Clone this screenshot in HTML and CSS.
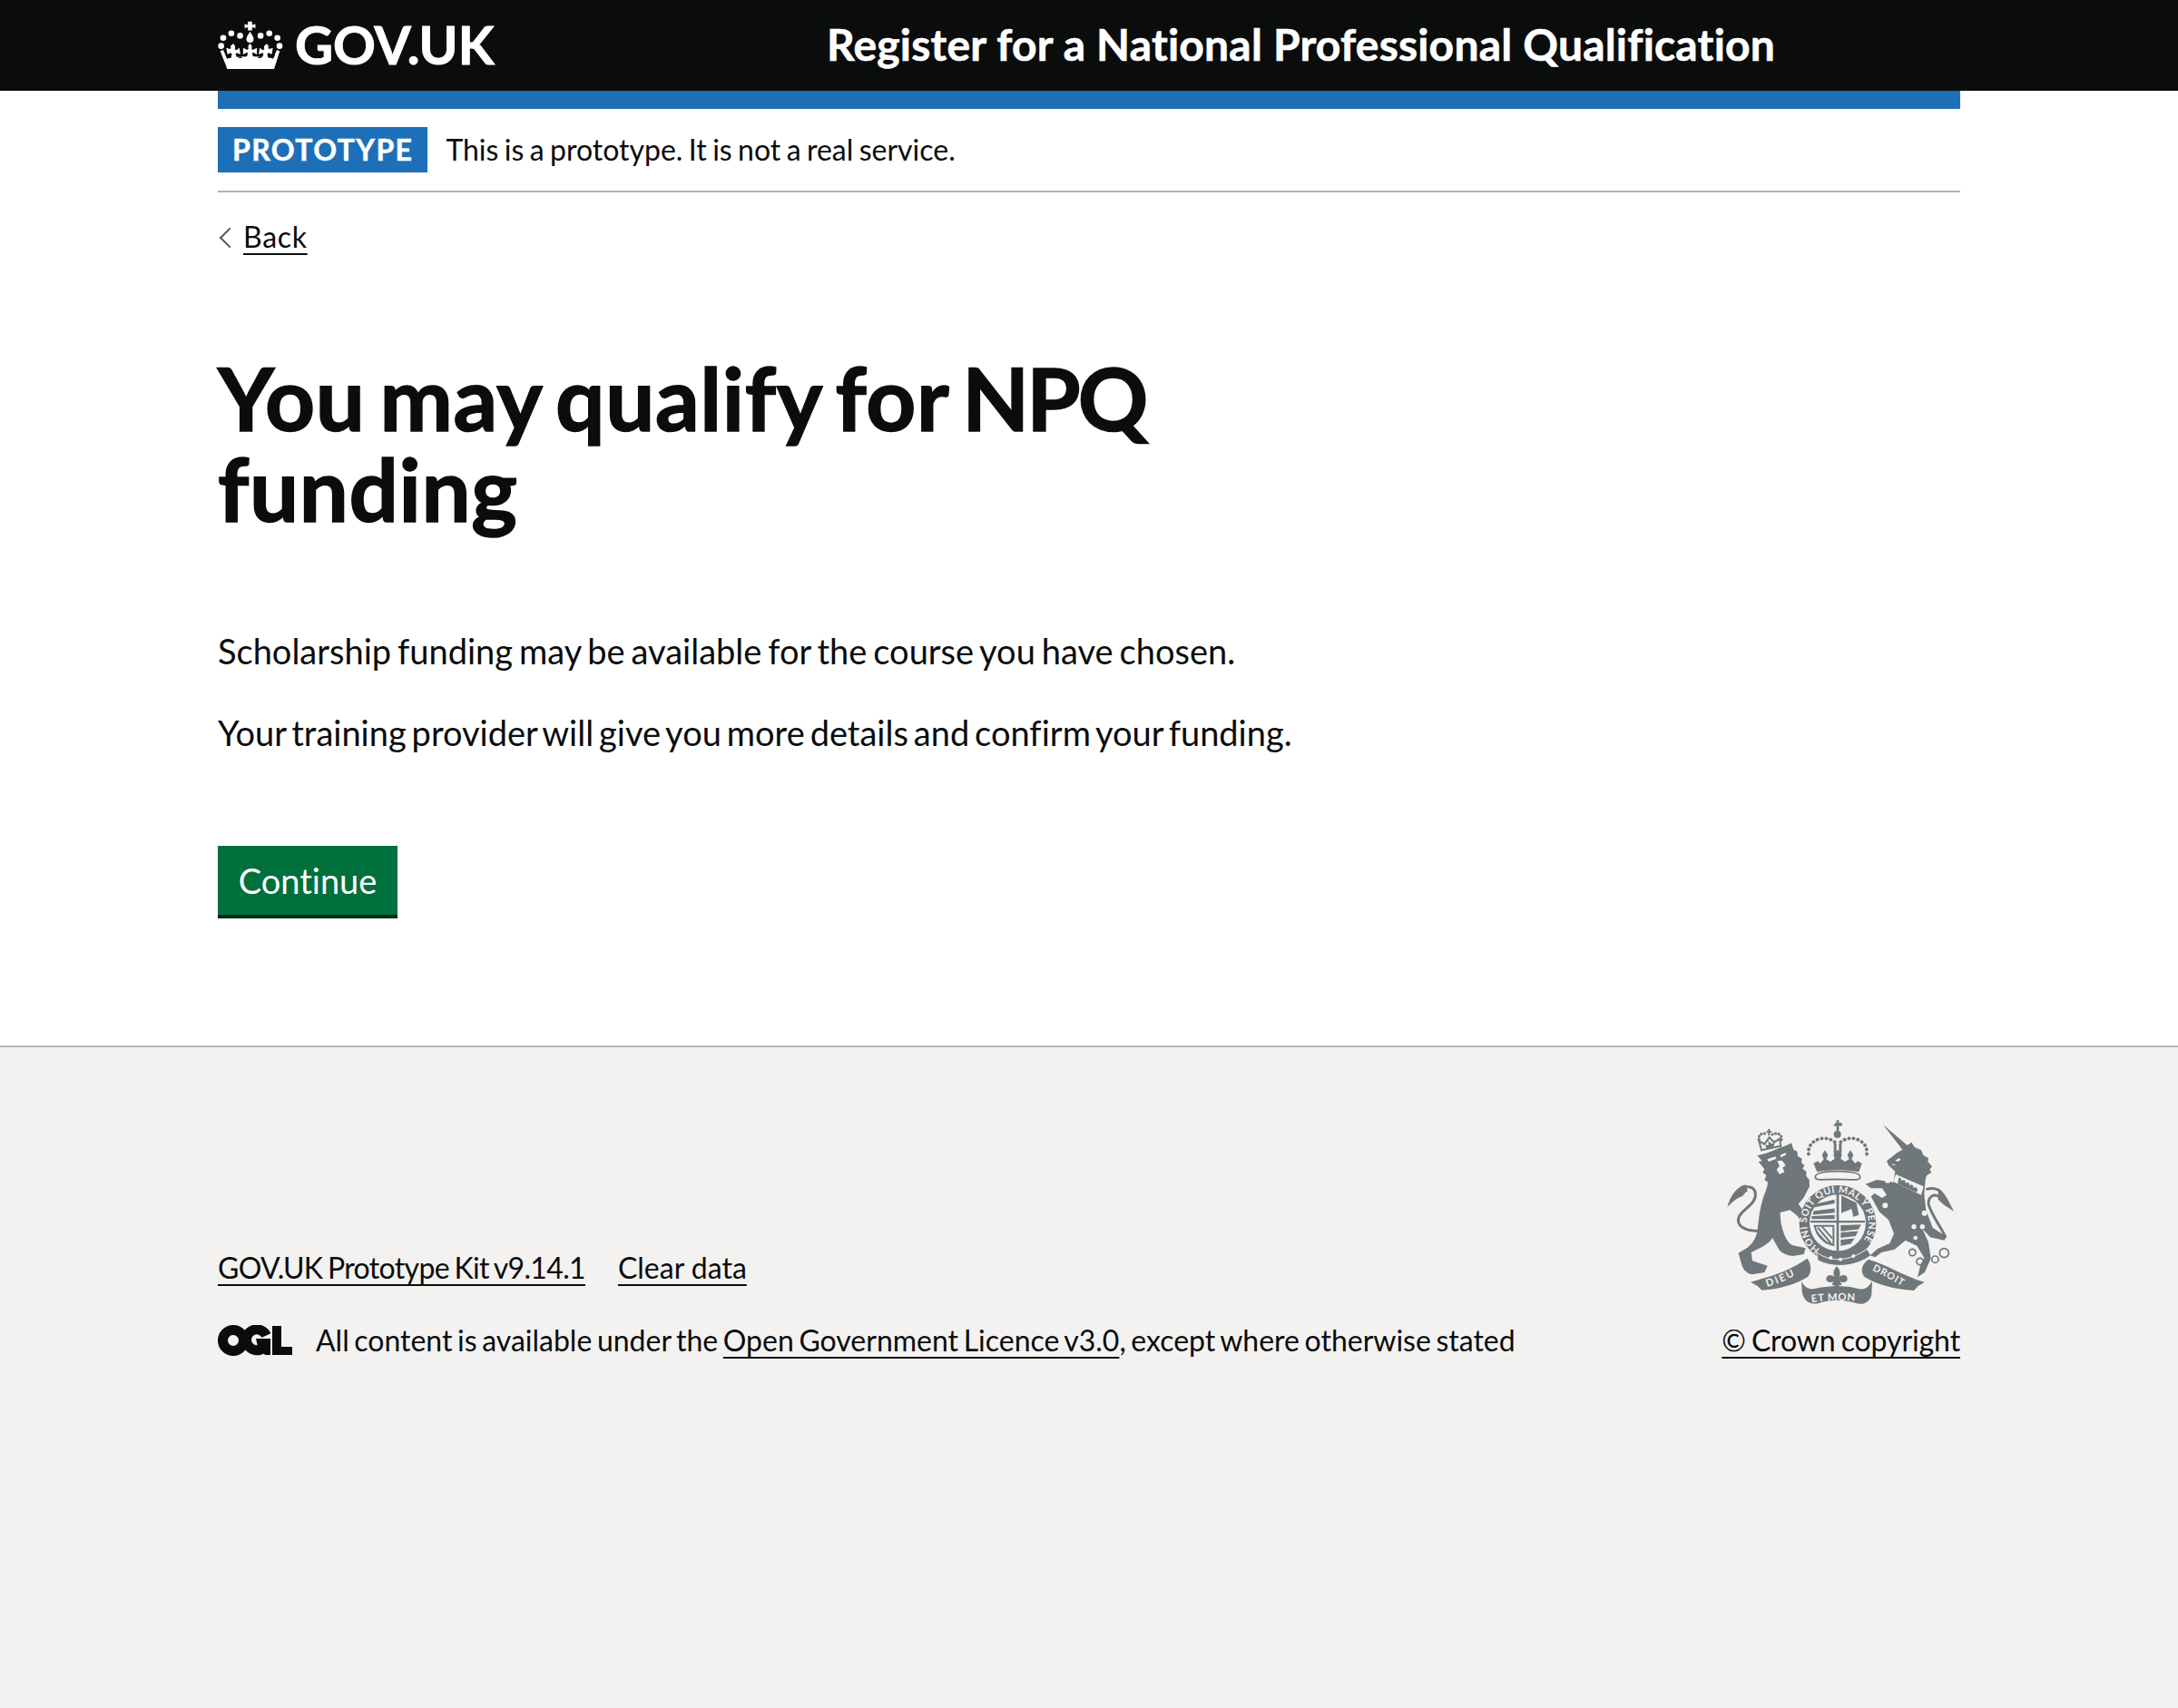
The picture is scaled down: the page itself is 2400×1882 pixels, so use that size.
FILE: index.html
```html
<!DOCTYPE html>
<html lang="en">
<head>
<meta charset="utf-8">
<title>Register for a National Professional Qualification</title>
<link rel="stylesheet" href="styles.css">
</head>
<body>
<header class="site-header">
  <div class="container header-inner">
    <a class="logo" href="#">
      <svg class="crown" viewBox="60 60 220 165" aria-hidden="true">
        <g fill="#fff">
          <circle cx="71" cy="146" r="10"/><circle cx="78" cy="119" r="10"/><circle cx="105" cy="104" r="10"/><circle cx="134" cy="112" r="10"/>
          <circle cx="202" cy="112" r="10"/><circle cx="231" cy="104" r="10"/><circle cx="258" cy="119" r="10"/><circle cx="265" cy="146" r="10"/>
          <path d="M160 65h14v11l11-3v14l-11-3v10h-14V84l-11 3V73l11 3z"/>
          <path d="M167 98c7 12 12 18 12 25a12 12 0 0 1-24 0c0-7 5-13 12-25z"/>
          <path d="M167 137c5 6 8 11 5 18l4 4 14-7v22l-13-7-3 4 5 14h-24l5-14-3-4-13 7v-22l14 7 4-4c-3-7 0-12 5-18z"/>
          <path d="M112 139c5 6 8 11 4 18l6 3 10-8 3 22-12-5-4 4 5 13H104l3-14-6-3-9 5-4-22 12 4 4-3c-4-6 0-10 8-14z"/>
          <path d="M222 139c5 4 9 8 5 14l4 3 12-4-4 22-9-5-6 3 3 14h-20l5-13-4-4-12 5 3-22 10 8 6-3c-4-7-1-12 7-18z"/>
          <path d="M68 163l10-4 9 20 4 8c50-8 100-8 152 0l4-8 9-20 10 4-19 59H91c-7-20-16-40-23-59z"/>
        </g>
        <g fill="#0b0c0c">
          <path d="M92 190l-8-16 12 4zM243 190l8-16-12 4zM128 186l6-6 8 6zM206 186l-6-6-8 6z"/>
        </g>
      </svg>
      <span class="logo-text">GOV.UK</span>
    </a>
    <a class="service-name" href="#">Register for a National Professional Qualification</a>
  </div>
</header>
<div class="container">
  <div class="blue-bar"></div>
  <div class="phase-banner">
    <strong class="tag">PROTOTYPE</strong>
    <span class="phase-text">This is a prototype. It is not a real service.</span>
  </div>
  <a class="back-link" href="#">Back</a>
  <main class="main">
    <h1 class="heading">You may qualify for <span class="acronym">NPQ</span> funding</h1>
    <p class="body-text body-text-first">Scholarship funding may be available for the course you have chosen.</p>
    <p class="body-text body-text-second">Your training provider will give you more details and confirm your funding.</p>
    <a class="button" href="#">Continue</a>
  </main>
</div>
<footer class="footer">
  <div class="container footer-meta">
    <div class="footer-left">
      <ul class="footer-links">
        <li><a class="link kit-link" href="#">GOV.UK Prototype Kit v9.14.1</a></li>
        <li><a class="link" href="#">Clear data</a></li>
      </ul>
      <div class="licence">
        <svg class="ogl" viewBox="0 0 82 34" aria-hidden="true">
          <circle cx="17" cy="17" r="11.5" fill="none" stroke="#0b0c0c" stroke-width="11"/>
          <path d="M53.5 11.5A11.5 11.5 0 1 0 50 25.5" fill="none" stroke="#0b0c0c" stroke-width="11"/>
          <path d="M42 15h16v18h-6l-3-4-3 3z" fill="#0b0c0c"/>
          <path d="M60 1h10v23h12v9H60z" fill="#0b0c0c"/>
        </svg>
        <span class="licence-text">All content is available under the <a class="link" href="#">Open Government Licence v3.0</a>, except where otherwise stated</span>
      </div>
    </div>
    <div class="footer-right">
      <svg class="crest" viewBox="60 30 780 630" aria-hidden="true">
        <defs>
          <path id="garter" d="M379.5 468.5A102 102 0 1 1 496.5 468.5"/>
          <path id="rib-l" d="M205 594Q270 575 332 535"/>
          <path id="rib-c" d="M348 646Q435 634 527 643"/>
          <path id="rib-r" d="M548 538Q605 562 662 600"/>
        </defs>
        <g fill="#6f777b">
          <!-- lion -->
          <path d="M172 160C195 155 215 148 232 140 250 132 270 128 285 118L292 140 304 146 306 162 320 170 318 184 328 192 322 204 334 212 334 228 344 240 345 262 325 300 308 320C322 338 338 362 346 388L330 398C320 375 300 352 280 340L248 348C248 375 252 392 258 410 264 430 274 448 288 456L332 466 326 486 290 492C270 490 255 484 245 472L222 432C212 450 190 462 152 480L156 508 206 524 196 546 155 553C140 550 128 540 122 525L110 482 140 464C158 448 168 432 172 410 176 385 178 345 190 305 197 282 205 268 207 248L196 240 202 226 190 215 196 205 176 180 188 178Z"/>
          <path d="M178 408C130 412 100 390 112 362 125 335 170 320 166 285 162 258 135 262 125 268" fill="none" stroke="#6f777b" stroke-width="9"/>
          <path d="M73 330C85 290 105 262 135 256L140 278C128 282 130 292 118 296 106 300 90 312 73 330Z"/>
          <path d="M205 172L232 163 236 170 210 180ZM248 158L268 150 266 158 250 166Z" fill="#f3f2f1"/>
          <path d="M238 178L254 176 266 192 256 200 262 214 246 222 236 206 246 194Z" fill="#f3f2f1"/>
          <path d="M186 142L178 112 196 122 212 100 228 116 246 104 250 128Z" fill="none" stroke="#6f777b" stroke-width="6"/>
          <path d="M198 125l12 0-2-14 12 10 10-4-4 14-22 6z"/>
          <path d="M203 78h5v-6h6v6h5v6h-5v10h-6V84h-5z"/>
          <path d="M178 108C174 90 190 82 206 90M252 108C256 90 238 82 222 90" fill="none" stroke="#6f777b" stroke-width="9" stroke-dasharray="1 10" stroke-linecap="round"/>
          <!-- central crown -->
          <path d="M430 52h4v-9h8v9h10v10h-10v16h-8V62h-10z"/>
          <circle cx="437" cy="90" r="12"/>
          <path d="M425 120h9v32h-9zM442 120h9v32h-9z"/>
          <path d="M358 186L372 178 380 186 392 172 386 158 396 142 406 158 400 172 414 180 428 170 424 156 438 140 452 156 448 170 462 180 476 172 470 158 480 142 490 158 484 172 496 186 504 178 518 186 508 214C470 206 408 206 370 214Z"/>
          <path d="M364 232C362 216 400 212 438 212 478 212 514 216 512 232 512 243 490 240 438 238 390 238 366 244 364 232Z" fill="#f3f2f1" stroke="#6f777b" stroke-width="5"/>
          <!-- garter and shield -->
          <circle cx="438" cy="385" r="127"/>
          <circle cx="438" cy="382" r="93" fill="#f3f2f1"/>
          <path d="M434 280h8v196h-8zM348 375h180v7H348z"/>
          <path d="M362 304l64-24v4l-60 22zM356 324l70-16v8l-70 14zM360 345l66-8v10l-68 6zM354 362l72-4v10h-72z" stroke="#6f777b" stroke-width="4"/>
          <path d="M450 292l50 24 8 40-18 6-6-26-34 14z"/>
          <path d="M362 392h62v64c-30-8-54-30-62-64z" fill="none" stroke="#6f777b" stroke-width="6"/>
          <path d="M372 398l44 52M386 394l34 40M368 412l34 38" fill="none" stroke="#6f777b" stroke-width="6"/>
          <path d="M450 392l62-2-6 12-56 6zM450 416l52-4-6 12-46 6zM450 440l40-4-10 14-30 6z" stroke="#6f777b" stroke-width="4"/>
          <path d="M368 478C410 515 480 510 535 468L548 490C495 530 420 532 372 506Z" stroke="#f3f2f1" stroke-width="3"/>
          <circle cx="415" cy="498" r="6" fill="#f3f2f1"/><circle cx="447" cy="503" r="6" fill="#f3f2f1"/><circle cx="490" cy="492" r="6" fill="#f3f2f1"/>
          <path d="M435 526c14 14 12 28 7 36 12-12 28-8 28 6 0 12-16 14-24 8l6 12-9 0-2 14h-12l-2-14-9 0 6-12c-8 6-24 4-24-8 0-14 16-18 28-6-5-8-7-22 7-36z"/>
          <!-- motto ribbons -->
          <path d="M150 578L200 563C250 550 300 525 338 500 352 520 352 545 340 560 300 585 250 600 188 605L172 590Z"/>
          <path d="M318 575C330 600 350 605 375 597 420 590 470 590 505 600 530 606 545 590 552 572L550 620C545 645 520 655 500 648 455 635 415 635 375 648 345 655 325 640 320 610Z"/>
          <path d="M725 578C660 560 600 520 540 503 515 520 512 545 528 562 570 588 625 602 690 606L705 590Z"/>
          <!-- unicorn -->
          <path d="M588 58L668 126 682 116 692 132 714 142 722 160 738 168 736 180 750 196 742 206 748 216 732 226 728 240 724 288 730 340 752 398 798 428 790 440 744 430 718 402 738 446 746 500 726 545 702 562 712 520 724 498 700 458 662 440 626 470 582 480 562 496 545 490 570 468 610 450 624 418 606 372 575 345 548 295 560 285 585 300 600 290 585 268 548 268 530 254 568 240 622 248 628 212 606 192 600 178 632 152 652 140Z"/>
          <path d="M730 272C760 262 785 275 785 300M738 320C750 360 770 380 795 430M738 320C738 295 755 285 772 295" fill="none" stroke="#6f777b" stroke-width="9"/>
          <path d="M770 272C790 278 800 300 822 344 805 332 785 322 770 305Z"/>
          <path d="M630 222L722 262 714 290 622 246Z" fill="#f3f2f1"/>
          <path d="M640 232l8 4 1 8 6-4 6 3 1 8 6-3 6 3 1 8 6-3 6 3 1 8 6-3 6 3 2 8-4 6-62-28z"/>
        </g>
        <g fill="#f3f2f1">
          <circle cx="690" cy="395" r="8"/><circle cx="718" cy="395" r="8"/><circle cx="695" cy="432" r="7"/><circle cx="725" cy="350" r="9"/><circle cx="603" cy="242" r="9"/><circle cx="595" cy="325" r="9"/>
          <path d="M628 176l14-8 4 6-10 6zM612 188l18 0-4 4z"/>
        </g>
        <g fill="none" stroke="#6f777b" stroke-width="5">
          <circle cx="685" cy="480" r="11"/><circle cx="710" cy="510" r="11"/><circle cx="760" cy="503" r="11"/><circle cx="790" cy="482" r="15"/>
          <path d="M342 155C335 110 395 85 432 118M534 155C541 110 480 85 444 118" stroke-width="11" stroke-dasharray="1 14" stroke-linecap="round"/>
        </g>
        <g class="crest-text">
          <text font-size="32" letter-spacing="1.5"><textPath href="#garter">HONI SOIT QUI MAL Y PENSE</textPath></text>
          <text font-size="34" letter-spacing="6"><textPath href="#rib-l">DIEU</textPath></text>
          <text font-size="34" letter-spacing="2"><textPath href="#rib-c" startOffset="4">ET MON</textPath></text>
          <text font-size="32" letter-spacing="3"><textPath href="#rib-r" startOffset="4">DROIT</textPath></text>
        </g>
      </svg>
      <a class="link copyright-link" href="#">© Crown copyright</a>
    </div>
  </div>
</footer>
</body>
</html>
```
FILE: styles.css
```css
* { box-sizing: border-box; }
html, body { margin: 0; padding: 0; }
body {
  min-height: 100vh;
  display: flex;
  flex-direction: column;
  font-family: Lato, "Liberation Sans", sans-serif;
  font-variant-ligatures: none;
  color: #0b0c0c;
  background: #fff;
}
.container { width: 1920px; margin: 0 auto; }
.site-header { background: #0b0c0c; height: 100px; }
.header-inner { display: flex; align-items: center; height: 100px; }
.logo { display: flex; align-items: center; gap: 12px; width: 671px; margin-top: -2px; color: #fff; text-decoration: none; }
.crown { width: 73px; height: 55px; display: block; }
.logo-text { font-size: 58px; font-weight: 700; line-height: 100px; -webkit-text-stroke: 1px #fff; }
.service-name { color: #fff; font-size: 48px; font-weight: 700; line-height: 96px; margin-top: -2px; letter-spacing: 0.2px; text-decoration: none; -webkit-text-stroke: 0.6px #fff; }
.blue-bar { height: 20px; background: #1d70b8; }
.phase-banner { display: flex; align-items: center; gap: 20px; padding: 20px 0; border-bottom: 2px solid #b1b4b6; height: 92px; }
.tag { background: #1d70b8; color: #fff; font-size: 32px; font-weight: 700; letter-spacing: 1.4px; line-height: 50px; padding: 0 16px; height: 50px; -webkit-text-stroke: 0.5px #fff; }
.phase-text { font-size: 32px; line-height: 50px; word-spacing: -1.8px; }
.back-link { display: inline-block; margin-top: 29px; padding-left: 28px; font-size: 32px; line-height: 40px; letter-spacing: 0.7px; color: #0b0c0c; position: relative; text-decoration: underline 2px; text-underline-offset: 6px; text-decoration-skip-ink: none; }
.back-link::before { content: ""; position: absolute; left: 5px; top: 13px; width: 14px; height: 14px; border-left: 2px solid #505a5f; border-bottom: 2px solid #505a5f; transform: rotate(45deg); }
.main { padding-top: 107px; padding-bottom: 140px; }
.heading { width: 1200px; margin: 0 0 104px; font-size: 96px; line-height: 100px; font-weight: 700; letter-spacing: 0.6px; word-spacing: -8px; -webkit-text-stroke: 1.5px #0b0c0c; }
.acronym { letter-spacing: -3px; }
.body-text { margin: 0 0 40px; font-size: 38px; line-height: 50px; }
.body-text-first { word-spacing: -2.8px; }
.body-text-second { word-spacing: -3.8px; }
.button { display: inline-block; margin-top: 60px; width: 198px; height: 80px; text-align: center; background: #00703c; border-bottom: 4px solid #002d18; color: #fff; font-size: 38px; line-height: 76px; text-decoration: none; }
.footer { flex: 1; background: #f3f2f1; border-top: 2px solid #b1b4b6; padding-top: 76px; }
.footer-meta { display: flex; justify-content: space-between; align-items: flex-end; font-size: 32px; line-height: 40px; }
.footer-links { display: flex; gap: 36px; margin: 0 0 40px; padding: 0; list-style: none; }
.licence { display: flex; align-items: center; gap: 26px; }
.licence-text { word-spacing: -2.6px; }
.ogl { width: 82px; height: 34px; display: block; }
.link { color: #0b0c0c; text-decoration: underline 2px; text-underline-offset: 6px; text-decoration-skip-ink: none; }
.kit-link { letter-spacing: -0.65px; word-spacing: -2px; }
.copyright-link { word-spacing: -2px; letter-spacing: -0.1px; }
.footer-right { display: flex; flex-direction: column; align-items: center; gap: 17px; }
.crest { width: 260px; height: 210px; display: block; }
.crest-text { fill: #f3f2f1; font-family: Lato, sans-serif; font-weight: 700; }
```
